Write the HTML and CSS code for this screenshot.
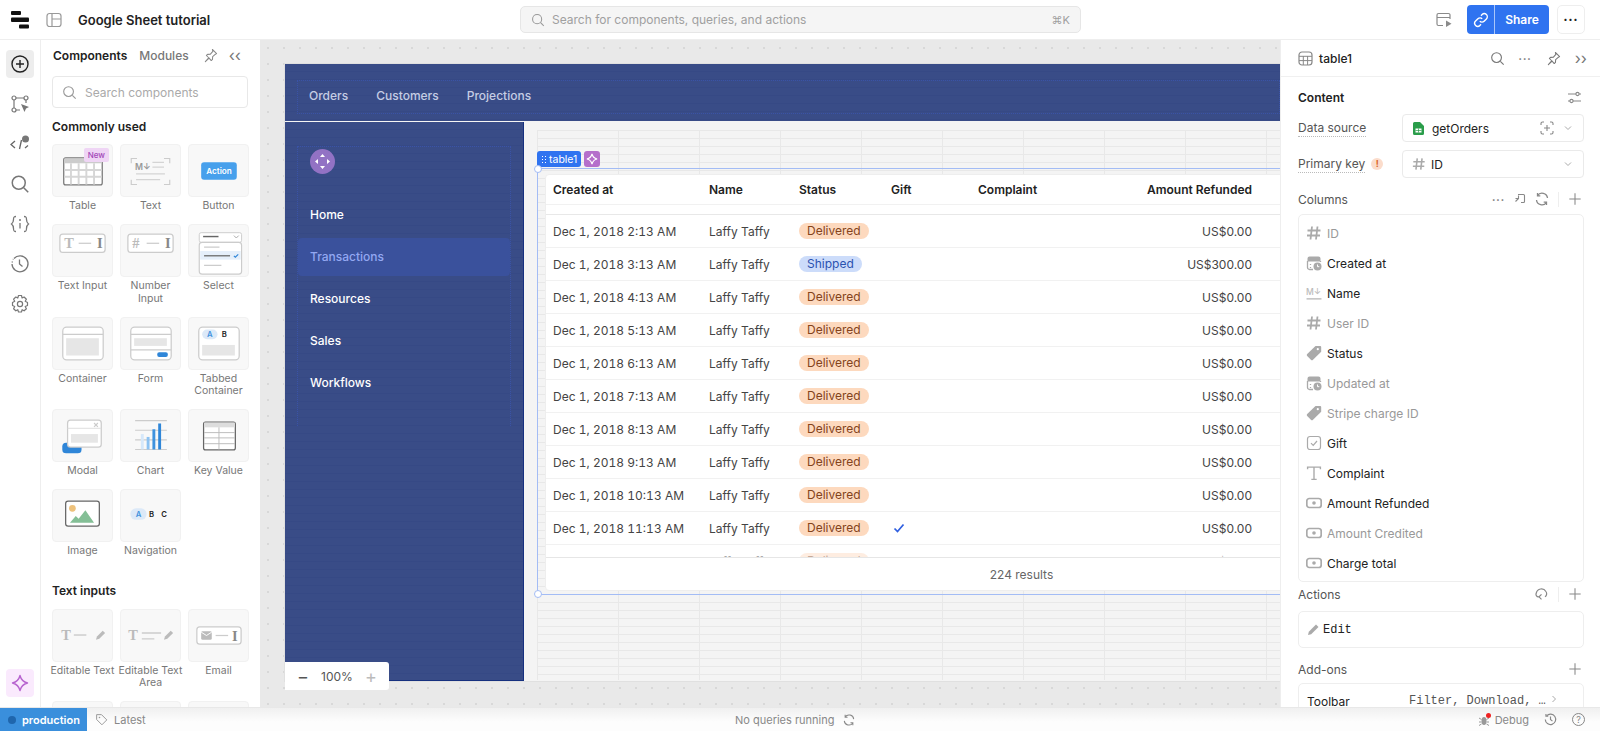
FILE: index.html
```html
<!DOCTYPE html>
<html>
<head>
	<title>Google Sheet tutorial</title>
	<meta charset="utf-8" />
	<link rel="stylesheet" href="styles.css">
</head>
<body>
	<svg class="defs" width="0" height="0">
		<symbol id="i-search" viewBox="0 0 16 16"><circle cx="7" cy="7" r="5.2" fill="none" stroke="currentColor" stroke-width="1.2"/><path d="M11 11l3.6 3.6" stroke="currentColor" stroke-width="1.2" fill="none"/></symbol>
		<symbol id="i-pin" viewBox="0 0 16 16"><path d="M10 1.5l4.5 4.5-1.2.6-3 2.6-.2 3-1.3 1.2-2.3-2.6-4 3.7 3.6-4.1L3.6 8l1.3-1.2 3-.2 2.6-3z" fill="none" stroke="currentColor" stroke-width="1.1" stroke-linejoin="round"/></symbol>
		<symbol id="i-hash" viewBox="0 0 16 16"><path d="M6 1.5L4.5 14.5M11.500 1.5L10 14.5M1.5 5.5h13M1 10.5h13" fill="none" stroke="currentColor" stroke-width="1.8"/></symbol>
		<symbol id="i-date" viewBox="0 0 16 16"><path d="M1.5 3.5a2 2 0 012-2h9a2 2 0 012 2v3h-13z" fill="currentColor"/><path d="M7 14.5H3.5a2 2 0 01-2-2V6" fill="none" stroke="currentColor" stroke-width="1.3"/><path d="M14.5 6v1" stroke="currentColor" stroke-width="1.3"/><circle cx="11.500" cy="11.500" r="4" fill="currentColor"/><path d="M11.500 9.5v2.2h1.8" fill="none" stroke="#fff" stroke-width="1"/><path d="M4.5 9v1M4.5 12v1" stroke="currentColor" stroke-width="1.3"/></symbol>
		<symbol id="i-tag" viewBox="0 0 16 16"><path d="M9.5 1h4.700a1 1 0 011 1v4.700L7 14.800a1.500 1.500 0 01-2.100 0L1.200 11.100a1.500 1.500 0 010-2.100z" fill="currentColor"/><circle cx="11.800" cy="4.200" r="1.100" fill="#fff"/></symbol>
		<symbol id="i-check" viewBox="0 0 16 16"><rect x="1.5" y="1.5" width="13" height="13" rx="2.5" fill="none" stroke="currentColor" stroke-width="1.2"/><path d="M5 8.2l2.200 2.200L11 6" fill="none" stroke="currentColor" stroke-width="1.2"/></symbol>
		<symbol id="i-money" viewBox="0 0 16 16"><rect x=".8" y="3.5" width="14.400" height="9" rx="2.5" fill="none" stroke="currentColor" stroke-width="1.7"/><circle cx="8" cy="8" r="1.8" fill="currentColor"/></symbol>
		<symbol id="i-plus" viewBox="0 0 16 16"><path d="M8 1.5v13M1.5 8h13" stroke="currentColor" stroke-width="1.2" fill="none"/></symbol>
		<symbol id="i-chev" viewBox="0 0 10 10"><path d="M2 3.5L5 6.5 8 3.5" fill="none" stroke="currentColor" stroke-width="1"/></symbol>
	</svg>

	<div class="app">
		<header class="topbar">
			<div class="top-left">
				<svg class="logo" width="18" height="18" viewBox="0 0 18 18"><rect x="0" y="0" width="10" height="4" rx="1" fill="#111"/><rect x="0" y="6.5" width="18" height="4.5" rx="1" fill="#111"/><rect x="8" y="13.500" width="10" height="4" rx="1" fill="#111"/></svg>
				<svg class="layout-icon" width="16" height="16" viewBox="0 0 16 16"><rect x="1" y="1.5" width="14" height="13" rx="2.5" fill="none" stroke="#999" stroke-width="1.2"/><path d="M6 1.5v13M6 7h9" stroke="#999" stroke-width="1.2" fill="none"/></svg>
				<span class="app-title">Google Sheet tutorial</span>
			</div>
			<div class="global-search">
				<svg width="14" height="14" class="muted-icon"><use href="#i-search"/></svg>
				<span>Search for components, queries, and actions</span>
				<span class="shortcut">⌘K</span>
			</div>
			<div class="top-right">
				<svg width="16" height="16" viewBox="0 0 16 16" class="preview-icon"><path d="M7 13.500H2.5A1.500 1.500 0 011 12V3a1.500 1.500 0 011.5-1.5h10A1.500 1.500 0 0114 3v4M1 5.5h13" fill="none" stroke="#8a8a8a" stroke-width="1.2"/><path d="M10 8.5l5.500 3.200L10 15z" fill="#8a8a8a"/></svg>
				<div class="share">
					<span class="share-link"><svg width="16" height="16" viewBox="0 0 16 16"><path d="M6.800 9.200a3 3 0 004.300 0l2.300-2.300a3 3 0 00-4.300-4.300L8 3.700M9.200 6.800a3 3 0 00-4.300 0L2.600 9.100a3 3 0 004.300 4.300L8 12.300" fill="none" stroke="#fff" stroke-width="1.4"/></svg></span>
					<span class="share-label">Share</span>
				</div>
				<span class="more-btn">•••</span>
			</div>
		</header>

		<div class="workspace">
			<nav class="rail">
				<span class="rail-btn active"><svg width="20" height="20" viewBox="0 0 20 20"><circle cx="10" cy="10" r="8" fill="none" stroke="#222" stroke-width="1.4"/><path d="M10 6v8M6 10h8" stroke="#222" stroke-width="1.4"/></svg></span>
				<span class="rail-btn"><svg width="20" height="20" viewBox="0 0 20 20"><path d="M4 4h12M4 4v12M4 16h6M16 4v5" fill="none" stroke="#777" stroke-width="1.2"/><circle cx="4" cy="4" r="2" fill="#fff" stroke="#777" stroke-width="1.2"/><circle cx="16" cy="4" r="2" fill="#fff" stroke="#777" stroke-width="1.2"/><circle cx="4" cy="16" r="2" fill="#fff" stroke="#777" stroke-width="1.2"/><path d="M11 10l8 3-3 1.5-1.5 3.500z" fill="#777"/></svg></span>
				<span class="rail-btn"><svg width="20" height="20" viewBox="0 0 20 20"><path d="M5 7l-4 3.5L5 14M9.5 15l2-9M15 14l3-2.5" fill="none" stroke="#666" stroke-width="1.3"/><circle cx="15.500" cy="5" r="3.5" fill="#777"/></svg></span>
				<span class="rail-btn"><svg width="20" height="20" viewBox="0 0 16 16" class="rail-gray"><use href="#i-search"/></svg></span>
				<span class="rail-btn"><svg width="20" height="20" viewBox="0 0 20 20"><path d="M6 2.5c-2.500 0-2.500 1-2.500 3s0 3-2 4.500c2 1.500 2 2.500 2 4.500s0 3 2.500 3M14 2.5c2.500 0 2.500 1 2.500 3s0 3 2 4.500c-2 1.500-2 2.500-2 4.500s0 3-2.500 3M10 9v5.500" fill="none" stroke="#777" stroke-width="1.3"/><circle cx="10" cy="6" r="1" fill="#777"/></svg></span>
				<span class="rail-btn"><svg width="20" height="20" viewBox="0 0 20 20"><path d="M4 4.5A8 8 0 1 1 2 10" fill="none" stroke="#777" stroke-width="1.3"/><path d="M2.5 7.5l-.5 1M3 5.5l.3-.5" stroke="#777" stroke-width="1.3"/><path d="M9.5 5.5V10l3 2.500" fill="none" stroke="#777" stroke-width="1.3"/></svg></span>
				<span class="rail-btn"><svg width="20" height="20" viewBox="0 0 20 20"><path d="M8.500 1.500h3l.6 2.500 2-1 2.300 2.200-1.200 2 2.300 1.300v3l-2.300 1 1.200 2.200-2.300 2.100-2-1.100-.6 2.300h-3l-.7-2.300-2 1.100-2.200-2.100 1.100-2.200-2.200-1v-3l2.200-1.300-1.100-2 2.200-2.200 2 1z" fill="none" stroke="#777" stroke-width="1.2" stroke-linejoin="round"/><circle cx="10" cy="10" r="2.6" fill="none" stroke="#777" stroke-width="1.2"/></svg></span>
				<span class="rail-btn ai"><svg width="20" height="20" viewBox="0 0 20 20"><path d="M10 2.5c1 4 3.500 6.500 7.500 7.500-4 1-6.500 3.500-7.500 7.500-1-4-3.500-6.500-7.500-7.500 4-1 6.500-3.500 7.500-7.500z" fill="none" stroke="#b764cf" stroke-width="1.4" stroke-linejoin="round"/></svg></span>
			</nav>

			<aside class="components">
				<div class="tabs">
					<span class="tab on">Components</span>
					<span class="tab">Modules</span>
					<svg width="15" height="15" class="pin"><use href="#i-pin"/></svg>
					<span class="collapse">‹‹</span>
				</div>
				<div class="comp-search">
					<svg width="15" height="15" class="muted-icon"><use href="#i-search"/></svg>
					<span>Search components</span>
				</div>
				<h4>Commonly used</h4>
				<div class="comp-grid">
					<div class="comp">
						<div class="card">
							<span class="new">New</span>
							<svg viewBox="0 0 60 53"><rect x="10.5" y="13.500" width="40" height="28" rx="2" fill="#fff" stroke="#777" stroke-width="1.3"/><rect x="11" y="14" width="39" height="5" fill="#ccc"/><path d="M11 26h39M11 33h39M18 19v22M26 19v22M34 19v22M42 19v22" stroke="#d6d6d6" stroke-width="2"/></svg>
						</div>
						<p>Table</p>
					</div>
					<div class="comp">
						<div class="card">
							<svg viewBox="0 0 60 53"><path d="M10 19v-5h6M44 14h6v5M10 36v5h6M44 41h6v-5" fill="none" stroke="#ccc" stroke-width="1.2"/><text x="14" y="26" class="svg-md">M↓</text><path d="M32 18h12M32 23h12M15 30h30M15 36h25" stroke="#d4d4d4" stroke-width="1.3"/></svg>
						</div>
						<p>Text</p>
					</div>
					<div class="comp">
						<div class="card">
							<svg viewBox="0 0 60 53"><rect x="12" y="18" width="37" height="18" rx="3" fill="#47a0ec"/><text x="30.500" y="30" class="svg-action">Action</text></svg>
						</div>
						<p>Button</p>
					</div>
					<div class="comp">
						<div class="card">
							<svg viewBox="0 0 60 53"><rect x="6.5" y="9.5" width="47" height="19" rx="3" fill="#fff" stroke="#ccc" stroke-width="1.3"/><text x="11" y="24" class="svg-t">T</text><path d="M26 19h13" stroke="#ccc" stroke-width="1.3"/><text x="45" y="24" class="svg-t dark">I</text></svg>
						</div>
						<p>Text Input</p>
					</div>
					<div class="comp">
						<div class="card">
							<svg viewBox="0 0 60 53"><rect x="6.5" y="9.5" width="47" height="19" rx="3" fill="#fff" stroke="#ccc" stroke-width="1.3"/><text x="11" y="24" class="svg-t">#</text><path d="M26 19h13" stroke="#ccc" stroke-width="1.3"/><text x="45" y="24" class="svg-t dark">I</text></svg>
						</div>
						<p>Number<br>Input</p>
					</div>
					<div class="comp">
						<div class="card">
							<svg viewBox="0 0 60 53"><rect x="10" y="8" width="44" height="10" rx="2" fill="#fff" stroke="#ccc"/><path d="M14 12h16" stroke="#666" stroke-width="1.5"/><path d="M46 11l2.500 2.500L51 11" fill="none" stroke="#aaa"/><rect x="10" y="18" width="44" height="33" rx="3" fill="#fff" stroke="#ccc" stroke-width="1.2"/><rect x="11" y="27" width="42" height="9" fill="#e5effa"/><path d="M15 23h16M15 42h18" stroke="#ccc" stroke-width="1.3"/><path d="M15 32h27" stroke="#666" stroke-width="1.3"/><path d="M46 32l1.500 1.500 3-3" fill="none" stroke="#2f86d8" stroke-width="1.2"/></svg>
						</div>
						<p>Select</p>
					</div>
					<div class="comp">
						<div class="card">
							<svg viewBox="0 0 60 53"><rect x="9.5" y="9.5" width="42" height="34" rx="4" fill="#fff" stroke="#ccc" stroke-width="1.3"/><path d="M9.5 17h42" stroke="#ccc" stroke-width="1.3"/><rect x="13" y="21" width="34" height="18" fill="#e6e6e6"/></svg>
						</div>
						<p>Container</p>
					</div>
					<div class="comp">
						<div class="card">
							<svg viewBox="0 0 60 53"><rect x="9.5" y="9.5" width="42" height="34" rx="4" fill="#fff" stroke="#ccc" stroke-width="1.3"/><path d="M9.5 33h42" stroke="#ccc" stroke-width="1.3"/><rect x="13" y="21" width="34" height="8" fill="#e6e6e6"/><path d="M9.5 17h42" stroke="#ccc" stroke-width="1.3"/><rect x="37" y="35.500" width="11" height="5" rx="2" fill="#2f86d8"/></svg>
						</div>
						<p>Form</p>
					</div>
					<div class="comp">
						<div class="card">
							<svg viewBox="0 0 60 53"><rect x="9.5" y="9.5" width="42" height="34" rx="4" fill="#fff" stroke="#ccc" stroke-width="1.3"/><rect x="13" y="12" width="16" height="10" rx="5" fill="#dce9f8"/><text x="21" y="20" class="svg-tab blue">A</text><text x="36" y="20" class="svg-tab">B</text><rect x="13" y="28" width="34" height="11" fill="#e6e6e6"/></svg>
						</div>
						<p>Tabbed<br>Container</p>
					</div>
					<div class="comp">
						<div class="card">
							<svg viewBox="0 0 60 53"><rect x="9" y="34" width="20" height="11" rx="4" fill="#2f86d8"/><rect x="14.500" y="10.5" width="35" height="28" rx="3" fill="#fff" stroke="#ccc" stroke-width="1.3"/><path d="M14.500 19h35" stroke="#ddd"/><path d="M42 13.500l4 4M46 13.500l-4 4" stroke="#ccc" stroke-width="1.2"/><rect x="18" y="25" width="28" height="9" fill="#e6e6e6"/></svg>
						</div>
						<p>Modal</p>
					</div>
					<div class="comp">
						<div class="card">
							<svg viewBox="0 0 60 53"><path d="M14 11h33M14 21h33M14 31h33M14 41h33" stroke="#ccc" stroke-width="1.2"/><rect x="20" y="25" width="3" height="16" fill="#d6e8fa"/><rect x="26" y="28" width="3" height="13" fill="#8cc2f2"/><rect x="32" y="20" width="3" height="21" fill="#3f92de"/><rect x="38" y="14" width="3" height="27" fill="#2f86d8"/></svg>
						</div>
						<p>Chart</p>
					</div>
					<div class="comp">
						<div class="card">
							<svg viewBox="0 0 60 53"><rect x="14.500" y="12.500" width="33" height="29" rx="2" fill="#fff" stroke="#666" stroke-width="1.3"/><rect x="15" y="13" width="32" height="5" fill="#ddd"/><path d="M15 23.500h32M15 29h32M15 35h32M30.500 18v23" stroke="#bbb" stroke-width="1"/></svg>
						</div>
						<p>Key Value</p>
					</div>
					<div class="comp">
						<div class="card">
							<svg viewBox="0 0 60 53"><rect x="12.500" y="11.5" width="35" height="26" rx="2.5" fill="#fff" stroke="#666" stroke-width="1.3"/><circle cx="19.500" cy="19" r="3.5" fill="#eec27c"/><path d="M17 34l6-7 3 3 7-9 9 13z" fill="#84bf96"/></svg>
						</div>
						<p>Image</p>
					</div>
					<div class="comp">
						<div class="card">
							<svg viewBox="0 0 60 53"><rect x="9" y="19" width="17" height="12" rx="6" fill="#dce9f8"/><text x="17.500" y="28.500" class="svg-tab blue">A</text><text x="31" y="28.500" class="svg-tab">B</text><text x="44" y="28.500" class="svg-tab">C</text></svg>
						</div>
						<p>Navigation</p>
					</div>
				</div>
				<h4 class="second">Text inputs</h4>
				<div class="comp-grid">
					<div class="comp">
						<div class="card">
							<svg viewBox="0 0 60 53"><text x="8" y="31" class="svg-t">T</text><path d="M21 26h13" stroke="#ccc" stroke-width="1.5"/><path d="M44 31l1-3.500 6-6 2.500 2.500-6 6z" fill="#bbb"/></svg>
						</div>
						<p>Editable Text</p>
					</div>
					<div class="comp">
						<div class="card">
							<svg viewBox="0 0 60 53"><text x="7" y="31" class="svg-t">T</text><path d="M21 24h20M21 30h13" stroke="#ccc" stroke-width="1.5"/><path d="M44 31l1-3.500 6-6 2.500 2.500-6 6z" fill="#bbb"/></svg>
						</div>
						<p>Editable Text<br>Area</p>
					</div>
					<div class="comp">
						<div class="card">
							<svg viewBox="0 0 60 53"><rect x="7.5" y="17.500" width="46" height="18" rx="3" fill="#fff" stroke="#ccc" stroke-width="1.3"/><rect x="12" y="22" width="11" height="9" rx="1.5" fill="#bbb"/><path d="M12 23l5.500 3.500L23 23" fill="none" stroke="#fff"/><path d="M27 26.500h13" stroke="#ccc" stroke-width="1.3"/><text x="44" y="32" class="svg-t dark">I</text></svg>
						</div>
						<p>Email</p>
					</div>
					<div class="comp"><div class="card"></div></div>
					<div class="comp"><div class="card"></div></div>
					<div class="comp"><div class="card"></div></div>
				</div>
			</aside>

			<main class="canvas">
				<div class="frame">
					<div class="app-header">
						<div class="app-links">
							<span>Orders</span>
							<span>Customers</span>
							<span>Projections</span>
						</div>
					</div>
					<div class="app-body">
						<div class="app-side">
							<div class="side-inner">
								<span class="side-logo"><svg width="15" height="15" viewBox="0 0 15 15"><path d="M7.5 0l2.500 3H5zM7.5 15L5 12h5zM0 7.5L3 5v5zM15 7.5L12 10V5z" fill="#fff"/></svg></span>
								<ul class="side-links">
									<li>Home</li>
									<li class="current">Transactions</li>
									<li>Resources</li>
									<li>Sales</li>
									<li>Workflows</li>
								</ul>
							</div>
						</div>
						<div class="app-main">
							<div class="grid-area">
								<div class="selection">
									<div class="sel-tag">
										<span class="sel-name"><i class="dots"></i>table1</span>
										<span class="sel-ai"><svg width="12" height="12" viewBox="0 0 20 20"><path d="M10 1.5c1 4.500 4 7.500 8.500 8.500-4.500 1-7.500 4-8.500 8.500-1-4.500-4-7.500-8.500-8.500 4.500-1 7.500-4 8.500-8.500z" fill="none" stroke="#fff" stroke-width="2"/></svg></span>
									</div>
									<i class="handle top"></i>
									<i class="handle bottom"></i>
									<div class="table">
										<div class="row head">
											<span>Created at</span><span>Name</span><span>Status</span><span>Gift</span><span>Complaint</span><span class="num">Amount Refunded</span>
										</div>
										<div class="rows">
											<div class="row"><span class="date">Dec 1, 2018 2:13 AM</span><span>Laffy Taffy</span><span><b class="pill">Delivered</b></span><span></span><span></span><span class="num">US$0.00</span></div>
											<div class="row"><span class="date">Dec 1, 2018 3:13 AM</span><span>Laffy Taffy</span><span><b class="pill shipped">Shipped</b></span><span></span><span></span><span class="num">US$300.00</span></div>
											<div class="row"><span class="date">Dec 1, 2018 4:13 AM</span><span>Laffy Taffy</span><span><b class="pill">Delivered</b></span><span></span><span></span><span class="num">US$0.00</span></div>
											<div class="row"><span class="date">Dec 1, 2018 5:13 AM</span><span>Laffy Taffy</span><span><b class="pill">Delivered</b></span><span></span><span></span><span class="num">US$0.00</span></div>
											<div class="row"><span class="date">Dec 1, 2018 6:13 AM</span><span>Laffy Taffy</span><span><b class="pill">Delivered</b></span><span></span><span></span><span class="num">US$0.00</span></div>
											<div class="row"><span class="date">Dec 1, 2018 7:13 AM</span><span>Laffy Taffy</span><span><b class="pill">Delivered</b></span><span></span><span></span><span class="num">US$0.00</span></div>
											<div class="row"><span class="date">Dec 1, 2018 8:13 AM</span><span>Laffy Taffy</span><span><b class="pill">Delivered</b></span><span></span><span></span><span class="num">US$0.00</span></div>
											<div class="row"><span class="date">Dec 1, 2018 9:13 AM</span><span>Laffy Taffy</span><span><b class="pill">Delivered</b></span><span></span><span></span><span class="num">US$0.00</span></div>
											<div class="row"><span class="date">Dec 1, 2018 10:13 AM</span><span>Laffy Taffy</span><span><b class="pill">Delivered</b></span><span></span><span></span><span class="num">US$0.00</span></div>
											<div class="row"><span class="date">Dec 1, 2018 11:13 AM</span><span>Laffy Taffy</span><span><b class="pill">Delivered</b></span><span class="gift"><svg width="12" height="12" viewBox="0 0 12 12"><path d="M1.5 6.5l3 3 6-7" fill="none" stroke="#2f5fe0" stroke-width="1.7"/></svg></span><span></span><span class="num">US$0.00</span></div>
											<div class="row faded"><span class="date">Dec 1, 2018 12:13 PM</span><span>Laffy Taffy</span><span><b class="pill">Delivered</b></span><span></span><span></span><span class="num">US$0.00</span></div>
										</div>
										<div class="table-foot">224 results</div>
									</div>
								</div>
							</div>
						</div>
					</div>
				</div>
				<div class="zoom-ctl"><span class="z-btn">−</span><span class="z-val">100%</span><span class="z-btn off">+</span></div>
			</main>

			<aside class="inspector">
				<div class="ins-head">
					<svg width="15" height="15" viewBox="0 0 15 15"><rect x="1" y="1" width="13" height="13" rx="3" fill="none" stroke="#888" stroke-width="1.2"/><path d="M1 5.3h13M1 9.6h13M5.3 5v9M9.6 5v9" stroke="#888" stroke-width="1"/></svg>
					<span class="ins-name">table1</span>
					<svg width="15" height="15" class="gray-icon first"><use href="#i-search"/></svg>
					<span class="ins-dots">•••</span>
					<svg width="15" height="15" class="gray-icon"><use href="#i-pin"/></svg>
					<span class="collapse">››</span>
				</div>
				<div class="ins-body">
					<div class="section-head strong">
						<span>Content</span>
						<svg width="15" height="15" viewBox="0 0 15 15"><path d="M1 4h8M12 4h2M1 11h2M6 11h8" stroke="#888" stroke-width="1.1"/><circle cx="10.500" cy="4" r="1.6" fill="none" stroke="#888" stroke-width="1.1"/><circle cx="4.5" cy="11" r="1.6" fill="none" stroke="#888" stroke-width="1.1"/></svg>
					</div>
					<div class="field">
						<label><span class="dotted">Data source</span></label>
						<div class="select">
							<svg class="sheet" width="11" height="13" viewBox="0 0 11 13"><path d="M1.5 0H7l4 4v7.500a1.500 1.500 0 01-1.500 1.500h-8A1.500 1.500 0 010 11.500v-10A1.500 1.500 0 011.5 0z" fill="#2a9d4a"/><rect x="2.5" y="6.5" width="6" height="4" fill="#fff"/><path d="M2.5 8.5h6M5.5 6.5v4" stroke="#2a9d4a" stroke-width=".7"/></svg>
							<span class="sel-text">getOrders</span>
							<svg width="14" height="14" viewBox="0 0 14 14" class="spaced"><path d="M1 4V2.5A1.500 1.500 0 012.5 1H4M10 1h1.500A1.500 1.500 0 0113 2.5V4M13 10v1.500a1.500 1.500 0 01-1.500 1.500H10M4 13H2.5A1.500 1.500 0 011 11.500V10M7 4v6M4 7h6" fill="none" stroke="#888" stroke-width="1.1"/></svg>
							<svg width="10" height="10" class="chev"><use href="#i-chev"/></svg>
						</div>
					</div>
					<div class="field">
						<label><span class="dotted">Primary key</span><i class="warn">!</i></label>
						<div class="select">
							<svg width="14" height="14" class="gray-light"><use href="#i-hash"/></svg>
							<span class="sel-text">ID</span>
							<svg width="10" height="10" class="chev auto"><use href="#i-chev"/></svg>
						</div>
					</div>
					<div class="section-head columns">
						<span>Columns</span>
						<span class="ins-dots small">•••</span>
						<svg width="12" height="12" viewBox="0 0 12 12" class="tool"><path d="M4 1.5h5.500a1 1 0 011 1v6a1 1 0 01-1 1H7M1.5 5.5h3V2.500M4.500 5.5L1.5 8.500" fill="none" stroke="#888" stroke-width="1.1"/></svg>
						<svg width="14" height="14" viewBox="0 0 14 14" class="tool"><path d="M12.500 6A5.500 5.500 0 002.5 3.500M1.5 8a5.500 5.500 0 0010 2.500M2.5 1v2.800h2.800M11.500 13v-2.800H8.700" fill="none" stroke="#888" stroke-width="1.3"/></svg>
						<i class="divider"></i>
						<svg width="14" height="14" class="tool plus"><use href="#i-plus"/></svg>
					</div>
					<ul class="col-list">
						<li class="off"><svg width="16" height="16"><use href="#i-hash"/></svg>ID</li>
						<li><svg width="16" height="16"><use href="#i-date"/></svg>Created at</li>
						<li><svg width="16" height="16" viewBox="0 0 15 15"><text x="0" y="9.5" class="svg-list">M↓</text><path d="M.5 13h14" stroke="#bbb" stroke-width="1.3"/></svg>Name</li>
						<li class="off"><svg width="16" height="16"><use href="#i-hash"/></svg>User ID</li>
						<li><svg width="16" height="16"><use href="#i-tag"/></svg>Status</li>
						<li class="off"><svg width="16" height="16"><use href="#i-date"/></svg>Updated at</li>
						<li class="off"><svg width="16" height="16"><use href="#i-tag"/></svg>Stripe charge ID</li>
						<li><svg width="16" height="16"><use href="#i-check"/></svg>Gift</li>
						<li><svg width="16" height="16" viewBox="0 0 15 15"><path d="M1.5 4V2h12v2M7.5 2v11.500M5 13.500h5" fill="none" stroke="#aaa" stroke-width="1.3"/></svg>Complaint</li>
						<li><svg width="16" height="16"><use href="#i-money"/></svg>Amount Refunded</li>
						<li class="off"><svg width="16" height="16"><use href="#i-money"/></svg>Amount Credited</li>
						<li><svg width="16" height="16"><use href="#i-money"/></svg>Charge total</li>
					</ul>
					<div class="section-head tight">
						<span>Actions</span>
						<svg width="14" height="14" viewBox="0 0 14 14" class="tool first"><path d="M4.500 9.800H3.500a2.500 2.500 0 01-2.200-3.700 5.200 5.200 0 019.600-1.600 3.700 3.700 0 01-.9 5.300M6.500 7.300L4 9.800l2.500 2.500" fill="none" stroke="#888" stroke-width="1.2"/></svg>
						<i class="divider"></i>
						<svg width="14" height="14" class="tool plus"><use href="#i-plus"/></svg>
					</div>
					<div class="edit-box">
						<svg width="13" height="13" viewBox="0 0 13 13"><path d="M1 12l.8-3.200L9 1.500l2.500 2.500-7.300 7.300z" fill="#aaa"/></svg>
						<span>Edit</span>
					</div>
					<div class="section-head addons">
						<span>Add-ons</span>
						<svg width="14" height="14" class="tool plus first"><use href="#i-plus"/></svg>
					</div>
					<div class="addon-box">
						<span>Toolbar</span>
						<span class="addon-val">Filter, Download, …</span>
						<svg width="10" height="10" viewBox="0 0 10 10"><path d="M3.5 2L6.5 5l-3 3" fill="none" stroke="#aaa"/></svg>
					</div>
				</div>
			</aside>
		</div>

		<footer class="status">
			<span class="env"><i></i>production</span>
			<span class="release"><svg width="13" height="13" viewBox="0 0 16 16"><path d="M2 2h6l6.500 6.500-6 6L2 8z" fill="none" stroke="#999" stroke-width="1.2"/><circle cx="5.5" cy="5.5" r="1" fill="#999"/></svg>Latest</span>
			<span class="queries">No queries running
				<svg width="12" height="12" viewBox="0 0 14 14"><path d="M12.500 6A5.500 5.500 0 002.5 3.500M1.5 8a5.500 5.500 0 0010 2.500M2.5 1v2.800h2.800M11.500 13v-2.800H8.700" fill="none" stroke="#888" stroke-width="1.2"/></svg>
			</span>
			<span class="status-right">
				<span class="debug"><svg width="12" height="12" viewBox="0 0 12 12"><ellipse cx="5" cy="7" rx="2.5" ry="4" fill="#999"/><path d="M0 4l2.500 1.500M0 8h2.500M0 11.500L2.500 10M10 4L7.500 5.500M10 8H7.500M10 11.500L7.500 10" stroke="#999"/></svg><i></i>Debug</span>
				<svg width="13" height="13" viewBox="0 0 20 20"><path d="M4 4.500A8 8 0 1 1 2 10" fill="none" stroke="#888" stroke-width="1.8"/><path d="M3 1.500v3.500h3.500M10 5.500V10l3 2.500" fill="none" stroke="#888" stroke-width="1.8"/></svg>
				<span class="help">?</span>
			</span>
		</footer>
	</div>
</body>
</html>
```
FILE: styles.css
```css
/* general styles */
* { box-sizing: border-box; }
html, body { margin: 0; height: 100%; overflow: hidden; }
body { font-family: Inter, "Noto Sans", sans-serif; font-size: 12px; color: #222; background: #fff; }
svg { display: block; flex-shrink: 0; }
ul { list-style: none; margin: 0; padding: 0; }
.defs { position: absolute; }
.app { height: 731px; display: flex; flex-direction: column; }
.workspace { flex: 1; min-height: 0; display: flex; }
.muted-icon { color: #999; }
.gray-icon { color: #777; }
.gray-light { color: #aaa; }

/* top bar */
.topbar { height: 40px; flex-shrink: 0; display: grid; grid-template-columns: 520px 561px 1fr; align-items: center; border-bottom: 1px solid #eee; }
.top-left { display: flex; align-items: center; padding-left: 11px; }
.logo { margin-right: 17px; }
.layout-icon { margin-right: 16px; }
.app-title { font-size: 13px; font-weight: 600; color: #222; }
.global-search { height: 27px; display: flex; align-items: center; gap: 7px; padding: 0 10px; background: #f5f5f5; border: 1px solid #e6e6e6; border-radius: 5px; color: #a0a0a0; }
.shortcut { margin-left: auto; font-size: 11px; }
.top-right { display: flex; align-items: center; justify-content: flex-end; padding-right: 15px; }
.preview-icon { margin-right: 15px; }
.share { display: flex; height: 29px; color: #fff; font-weight: 600; border-radius: 4px; overflow: hidden; margin-right: 8px; }
.share-link { width: 28px; background: #2f73f0; display: flex; align-items: center; justify-content: center; border-right: 1px solid #a9c6fa; }
.share-label { width: 54px; background: #2f73f0; display: flex; align-items: center; justify-content: center; }
.more-btn { width: 28px; height: 29px; border: 1px solid #eee; border-radius: 5px; display: flex; align-items: center; justify-content: center; font-size: 7px; letter-spacing: 1px; color: #222; }

/* left rail */
.rail { width: 41px; flex-shrink: 0; border-right: 1px solid #eee; padding: 10px 6px; display: flex; flex-direction: column; gap: 12px; }
.rail-btn { width: 28px; height: 28px; display: flex; align-items: center; justify-content: center; border-radius: 4px; }
.rail-btn.active { background: #ededed; }
.rail-gray { color: #777; }
.rail-btn.ai { margin-top: auto; background: #faeafd; }

/* components panel */
.components { width: 219px; flex-shrink: 0; padding: 0 12px 0 11px; overflow: hidden; }
.tabs { height: 30px; padding-left: 1px; display: flex; align-items: center; gap: 12px; }
.tab { font-weight: 500; color: #777; }
.tab.on { font-weight: 600; color: #222; }
.pin { color: #888; margin-left: 2px; }
.collapse { font-size: 16px; line-height: 14px; color: #777; }
.tabs .collapse { margin-left: -1px; }
.comp-search { height: 32px; margin-top: 6px; border: 1px solid #e8e8e8; border-radius: 4px; display: flex; align-items: center; gap: 8px; padding: 0 9px; color: #aaa; }
h4 { margin: 12px 0 10px; font-size: 12px; line-height: 14px; font-weight: 600; color: #222; }
h4.second { margin: 26px 0 11px; }
.comp-grid { display: grid; grid-template-columns: repeat(3, 61px); column-gap: 7px; row-gap: 11.5px; }
.card { position: relative; height: 53px; background: #f8f8f8; border: 1px solid #f1f1f1; border-radius: 4px; }
.card svg { width: 100%; height: 100%; }
.comp p { margin: 3px -4px 0; text-align: center; font-size: 10.5px; line-height: 12.5px; color: #777; }
.new { position: absolute; top: 3px; right: 3px; padding: 0 4px; height: 14px; line-height: 14px; font-size: 8px; font-weight: 500; background: #efd5f5; color: #a348b8; border-radius: 2px; z-index: 1; }
.svg-md { font: 600 9px Inter, sans-serif; fill: #999; }
.svg-action { font: 600 8.5px Inter, sans-serif; fill: #fff; text-anchor: middle; }
.svg-t { font: 700 15px "Liberation Serif", serif; fill: #bbb; }
.svg-t.dark { fill: #888; }
.svg-tab { font: 600 8px Inter, sans-serif; fill: #222; text-anchor: middle; }
.svg-tab.blue { fill: #3f92de; }
.svg-list { font: 500 8px Inter, sans-serif; fill: #bbb; }

/* canvas */
.canvas { position: relative; flex: 1; min-width: 0; overflow: hidden; padding: 24px 0 26px 25px; background-color: #e9e9e9; background-image: radial-gradient(circle, #d8d8d8 1px, transparent 1px); background-size: 16px 16px; }
.frame { height: 100%; display: flex; flex-direction: column; box-shadow: 0 0 0 1px #e0e0e0; }
.app-header { height: 58px; flex-shrink: 0; padding: 16px 0 7px 0; background-color: #394c87; background-image: repeating-linear-gradient(to bottom, transparent 0 7px, rgba(30,50,120,.12) 7px 8px); border-bottom: 1px solid #f4f4f4; }
.app-links { height: 100%; margin-left: 12px; padding: 0 0 4px 11px; display: flex; align-items: center; gap: 28px; font-size: 12px; font-weight: 500; color: #c5cde4; border: 1px dotted rgba(60,90,200,.5); }
.app-body { flex: 1; min-height: 0; display: flex; }
.app-side { width: 239px; flex-shrink: 0; padding: 24px 12px 0 12px; background-color: #394c87; background-image: repeating-linear-gradient(to bottom, transparent 0 7px, rgba(30,50,120,.12) 7px 8px); border-right: 1px solid #16307f; border-bottom: 1px solid #16307f; }
.side-inner { height: 280px; border: 1px dotted rgba(60,90,200,.5); border-bottom: 0; padding: 2px 0 0; }
.side-logo { width: 25px; height: 25px; margin-left: 12px; border-radius: 50%; background: #9272c4; display: flex; align-items: center; justify-content: center; }
.side-links { margin-top: 22px; display: flex; flex-direction: column; gap: 4px; font-size: 12px; font-weight: 500; color: #fff; }
.side-links li { height: 38px; line-height: 38px; padding-left: 12px; border-radius: 4px; }
.side-links li.current { background: #3a519c; color: #93a8f2; }
.app-main { flex: 1; min-width: 0; padding: 8px 0 0 13px; background: #f4f4f4; border-bottom: 1px solid #f4f4f4; }
.grid-area { height: 100%; padding-top: 38px; background-image: repeating-linear-gradient(to bottom, #e8e8e8 0 1px, transparent 1px 8px), repeating-linear-gradient(to right, #e8e8e8 0 1px, transparent 1px 81px); }
.selection { position: relative; width: 968px; height: 427px; padding: 5px 7px; border: 1px solid #a3bcf5; border-right: 0; }
.sel-tag { position: absolute; top: -18px; left: -1px; display: flex; gap: 3px; z-index: 2; }
.sel-name { height: 16px; padding: 0 4px; display: flex; align-items: center; gap: 3px; background: #2f73f0; color: #fff; font-size: 10.5px; border-radius: 3px; }
.dots { width: 5px; height: 8px; background-image: radial-gradient(circle, #fff 1px, transparent 1px); background-size: 3px 3px; }
.sel-ai { width: 16px; height: 16px; display: flex; align-items: center; justify-content: center; background: #b56fcb; border-radius: 3px; }
.handle { position: absolute; left: -4px; width: 8px; height: 8px; border-radius: 50%; background: #fff; border: 1px solid #a3bcf5; z-index: 2; }
.handle.top { top: -4px; }
.handle.bottom { bottom: -4px; }

/* table */
.table { height: 417px; background: #fff; border: 1px solid #eee; border-radius: 4px; overflow: hidden; display: flex; flex-direction: column; }
.row { display: grid; grid-template-columns: 156px 90px 92px 87px 142px 132px 1fr; padding-left: 7px; align-items: center; height: 33px; border-bottom: 1px solid #f1f1f1; color: #444; white-space: nowrap; }
.row .num { text-align: right; }
.row.head { flex-shrink: 0; height: 30px; margin-bottom: 10px; font-weight: 600; color: #222; box-shadow: 0 9px 0 #fff, 0 10px 0 #e8e8e8; }
.rows { flex: 1; min-height: 0; overflow: hidden; }
.date { font-variant-numeric: tabular-nums; }
.faded { opacity: .45; }
.gift { padding-left: 2px; }
.pill { display: inline-block; height: 16px; line-height: 16px; padding: 0 8px; font-weight: 400; border-radius: 8px; background: #fdd9be; color: #84431b; }
.pill.shipped { background: #ccdcfa; color: #2a52b0; }
.table-foot { flex-shrink: 0; height: 33px; display: flex; align-items: center; justify-content: center; color: #666; border-top: 1px solid #e6e6e6; }
.zoom-ctl { position: absolute; left: 25px; top: 622px; width: 104px; height: 28px; display: flex; align-items: center; background: #fff; border-radius: 0 3px 3px 0; color: #555; }
.z-btn { width: 40px; text-align: center; font-size: 18px; }
.z-btn.off { color: #bbb; }
.z-val { flex: 1; text-align: center; white-space: nowrap; }

/* inspector */
.inspector { width: 320px; flex-shrink: 0; border-left: 1px solid #eee; background: #fff; overflow: hidden; }
.ins-head { height: 37px; display: flex; align-items: center; padding: 0 13px 0 17px; border-bottom: 1px solid #f0f0f0; gap: 14px; }
.ins-name { font-weight: 500; margin-left: -8px; }
.first { margin-left: auto; }
.ins-dots { font-size: 6px; letter-spacing: 1px; color: #777; }
.ins-dots.small { margin-left: auto; }
.ins-body { padding: 10px 16px 0 18px; }
.ins-body > .section-head, .ins-body > .col-list, .ins-body > .edit-box, .ins-body > .addon-box { margin-left: -1px; }
.section-head { height: 20px; display: flex; align-items: center; gap: 9px; color: #555; }
.section-head.strong { font-weight: 600; color: #222; justify-content: space-between; margin-bottom: 7px; padding-right: 2px; }
.section-head.columns { margin-top: 11px; }
.section-head .tool { color: #888; }
.divider { width: 1px; height: 15px; background: #eee; }
.plus { margin-right: 2px; }
.field { display: grid; grid-template-columns: 103px 1fr; align-items: center; height: 28px; margin-bottom: 8px; margin-left: -1px; color: #555; }
.field label { display: flex; align-items: center; gap: 6px; }
.dotted { border-bottom: 1px dotted #bbb; padding-bottom: 1px; }
.warn { width: 12px; height: 12px; border-radius: 50%; background: #fbdccb; color: #d9642a; font-size: 9px; font-style: normal; font-weight: 700; text-align: center; line-height: 12px; }
.select { height: 28px; margin-left: 1px; display: flex; align-items: center; padding: 0 10px 0 9px; gap: 5px; border: 1px solid #eaeaea; border-radius: 4px; color: #222; }
.sheet { margin: 0 3px 0 1px; }
.spaced { margin-left: auto; margin-right: 4px; }
.chev { color: #aaa; }
.chev.auto { margin-left: auto; }
.col-list { margin-top: 5px; padding: 3px 0; border: 1px solid #eee; border-radius: 5px; }
.col-list li { height: 30px; display: flex; align-items: center; gap: 5px; padding-left: 7px; color: #222; }
.col-list li svg { color: #aaa; }
.col-list li.off { color: #999; }
.section-head.tight { margin-top: 2px; }
.edit-box { height: 37px; margin-top: 7px; display: flex; align-items: center; gap: 3px; padding-left: 8px; border: 1px solid #eee; border-radius: 5px; font-family: "Liberation Mono", monospace; }
.section-head.addons { margin-top: 11px; }
.addon-box { height: 40px; margin-top: 4px; padding: 10px 8px 0; display: flex; align-items: flex-start; border: 1px solid #eee; border-radius: 5px; }
.addon-box span:first-child { width: 102px; }
.addon-val { font-family: "Liberation Mono", monospace; width: 140px; color: #555; }

/* status bar */
.status { position: relative; height: 24px; flex-shrink: 0; display: flex; align-items: center; background: linear-gradient(to bottom, #f0f0f0, #fdfdfd 60%); border-top: 1px solid #e8e8e8; color: #888; font-size: 11px; }
.env { width: 87px; height: 100%; display: flex; align-items: center; gap: 6px; padding-left: 8px; background: #3a8fdc; color: #fff; font-weight: 600; }
.env i { width: 8px; height: 8px; border-radius: 50%; background: #1f66ad; }
.release { display: flex; align-items: center; gap: 6px; margin-left: 8px; }
.queries { position: absolute; left: 735px; display: flex; align-items: center; gap: 9px; }
.status-right { margin-left: auto; padding-right: 15px; display: flex; align-items: center; gap: 15px; }
.debug { position: relative; display: flex; align-items: center; gap: 4px; }
.debug i { position: absolute; left: 7px; top: 0; width: 5px; height: 5px; border-radius: 50%; background: #e22; }
.help { width: 13px; height: 13px; border: 1px solid #888; border-radius: 50%; text-align: center; line-height: 11px; font-size: 9px; }
```
